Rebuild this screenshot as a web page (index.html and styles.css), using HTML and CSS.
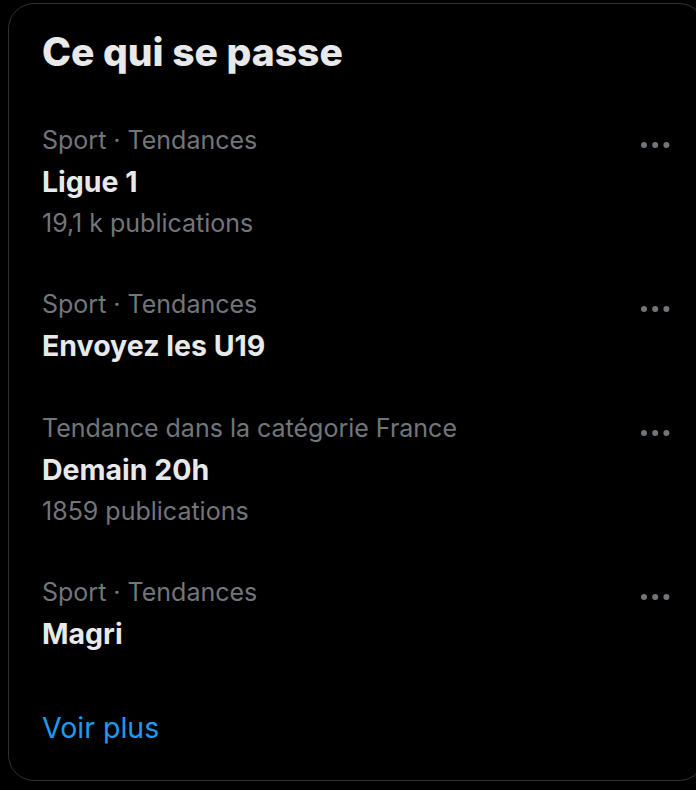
FILE: index.html
```html
<!DOCTYPE html>
<html>
<head>
  <link rel="stylesheet" href="styles.css">
</head>
<body>
  <div class="trends-card">
    <h2 class="trends-title">Ce qui se passe</h2>

    <div class="trend">
      <div class="trend-text">
        <div class="trend-meta">Sport · Tendances</div>
        <div class="trend-name">Ligue 1</div>
        <div class="trend-count">19,1 k publications</div>
      </div>
      <svg class="trend-more" viewBox="0 0 29 8"><circle cx="3" cy="4" r="3"/><circle cx="14.2" cy="4" r="3"/><circle cx="25.4" cy="4" r="3"/></svg>
    </div>

    <div class="trend">
      <div class="trend-text">
        <div class="trend-meta">Sport · Tendances</div>
        <div class="trend-name">Envoyez les U19</div>
      </div>
      <svg class="trend-more" viewBox="0 0 29 8"><circle cx="3" cy="4" r="3"/><circle cx="14.2" cy="4" r="3"/><circle cx="25.4" cy="4" r="3"/></svg>
    </div>

    <div class="trend">
      <div class="trend-text">
        <div class="trend-meta">Tendance dans la catégorie France</div>
        <div class="trend-name">Demain 20h</div>
        <div class="trend-count">1859 publications</div>
      </div>
      <svg class="trend-more" viewBox="0 0 29 8"><circle cx="3" cy="4" r="3"/><circle cx="14.2" cy="4" r="3"/><circle cx="25.4" cy="4" r="3"/></svg>
    </div>

    <div class="trend">
      <div class="trend-text">
        <div class="trend-meta">Sport · Tendances</div>
        <div class="trend-name">Magri</div>
      </div>
      <svg class="trend-more" viewBox="0 0 29 8"><circle cx="3" cy="4" r="3"/><circle cx="14.2" cy="4" r="3"/><circle cx="25.4" cy="4" r="3"/></svg>
    </div>

    <a class="show-more" href="#">Voir plus</a>
  </div>
</body>
</html>
```

FILE: styles.css
```css
html, body {
  overflow: hidden;
}

body {
  margin: 0;
  padding: 0;
  font-family: Inter, "Noto Sans", Roboto, sans-serif;
  background: #000000;
  color: #e7e9ea;
}

.trends-card {
  box-sizing: border-box;
  width: 697px;
  height: 778px;
  margin: 3px 0 0 8px;
  border: 1px solid #2f3336;
  border-radius: 26px;
  display: flex;
  flex-direction: column;
}

.trends-title {
  margin: 0;
  padding: 20px 33px;
  font-size: 39px;
  font-weight: 800;
  line-height: 56px;
}

.trend {
  display: flex;
  justify-content: space-between;
  align-items: flex-start;
  padding: 20px 34px 21px 33px;
}

.trend-meta {
  font-size: 25px;
  line-height: 41px;
  color: #71767b;
}

.trend-name {
  font-size: 28.5px;
  font-weight: 700;
  line-height: 42px;
}

.trend-count {
  font-size: 25px;
  line-height: 40px;
  color: #71767b;
}

.trend-more {
  width: 29px;
  height: 8px;
  margin-top: 21px;
  fill: #71767b;
}

.show-more {
  padding: 36px 33px;
  font-size: 28.5px;
  line-height: 32px;
  color: #1d9bf0;
  text-decoration: none;
}
```
